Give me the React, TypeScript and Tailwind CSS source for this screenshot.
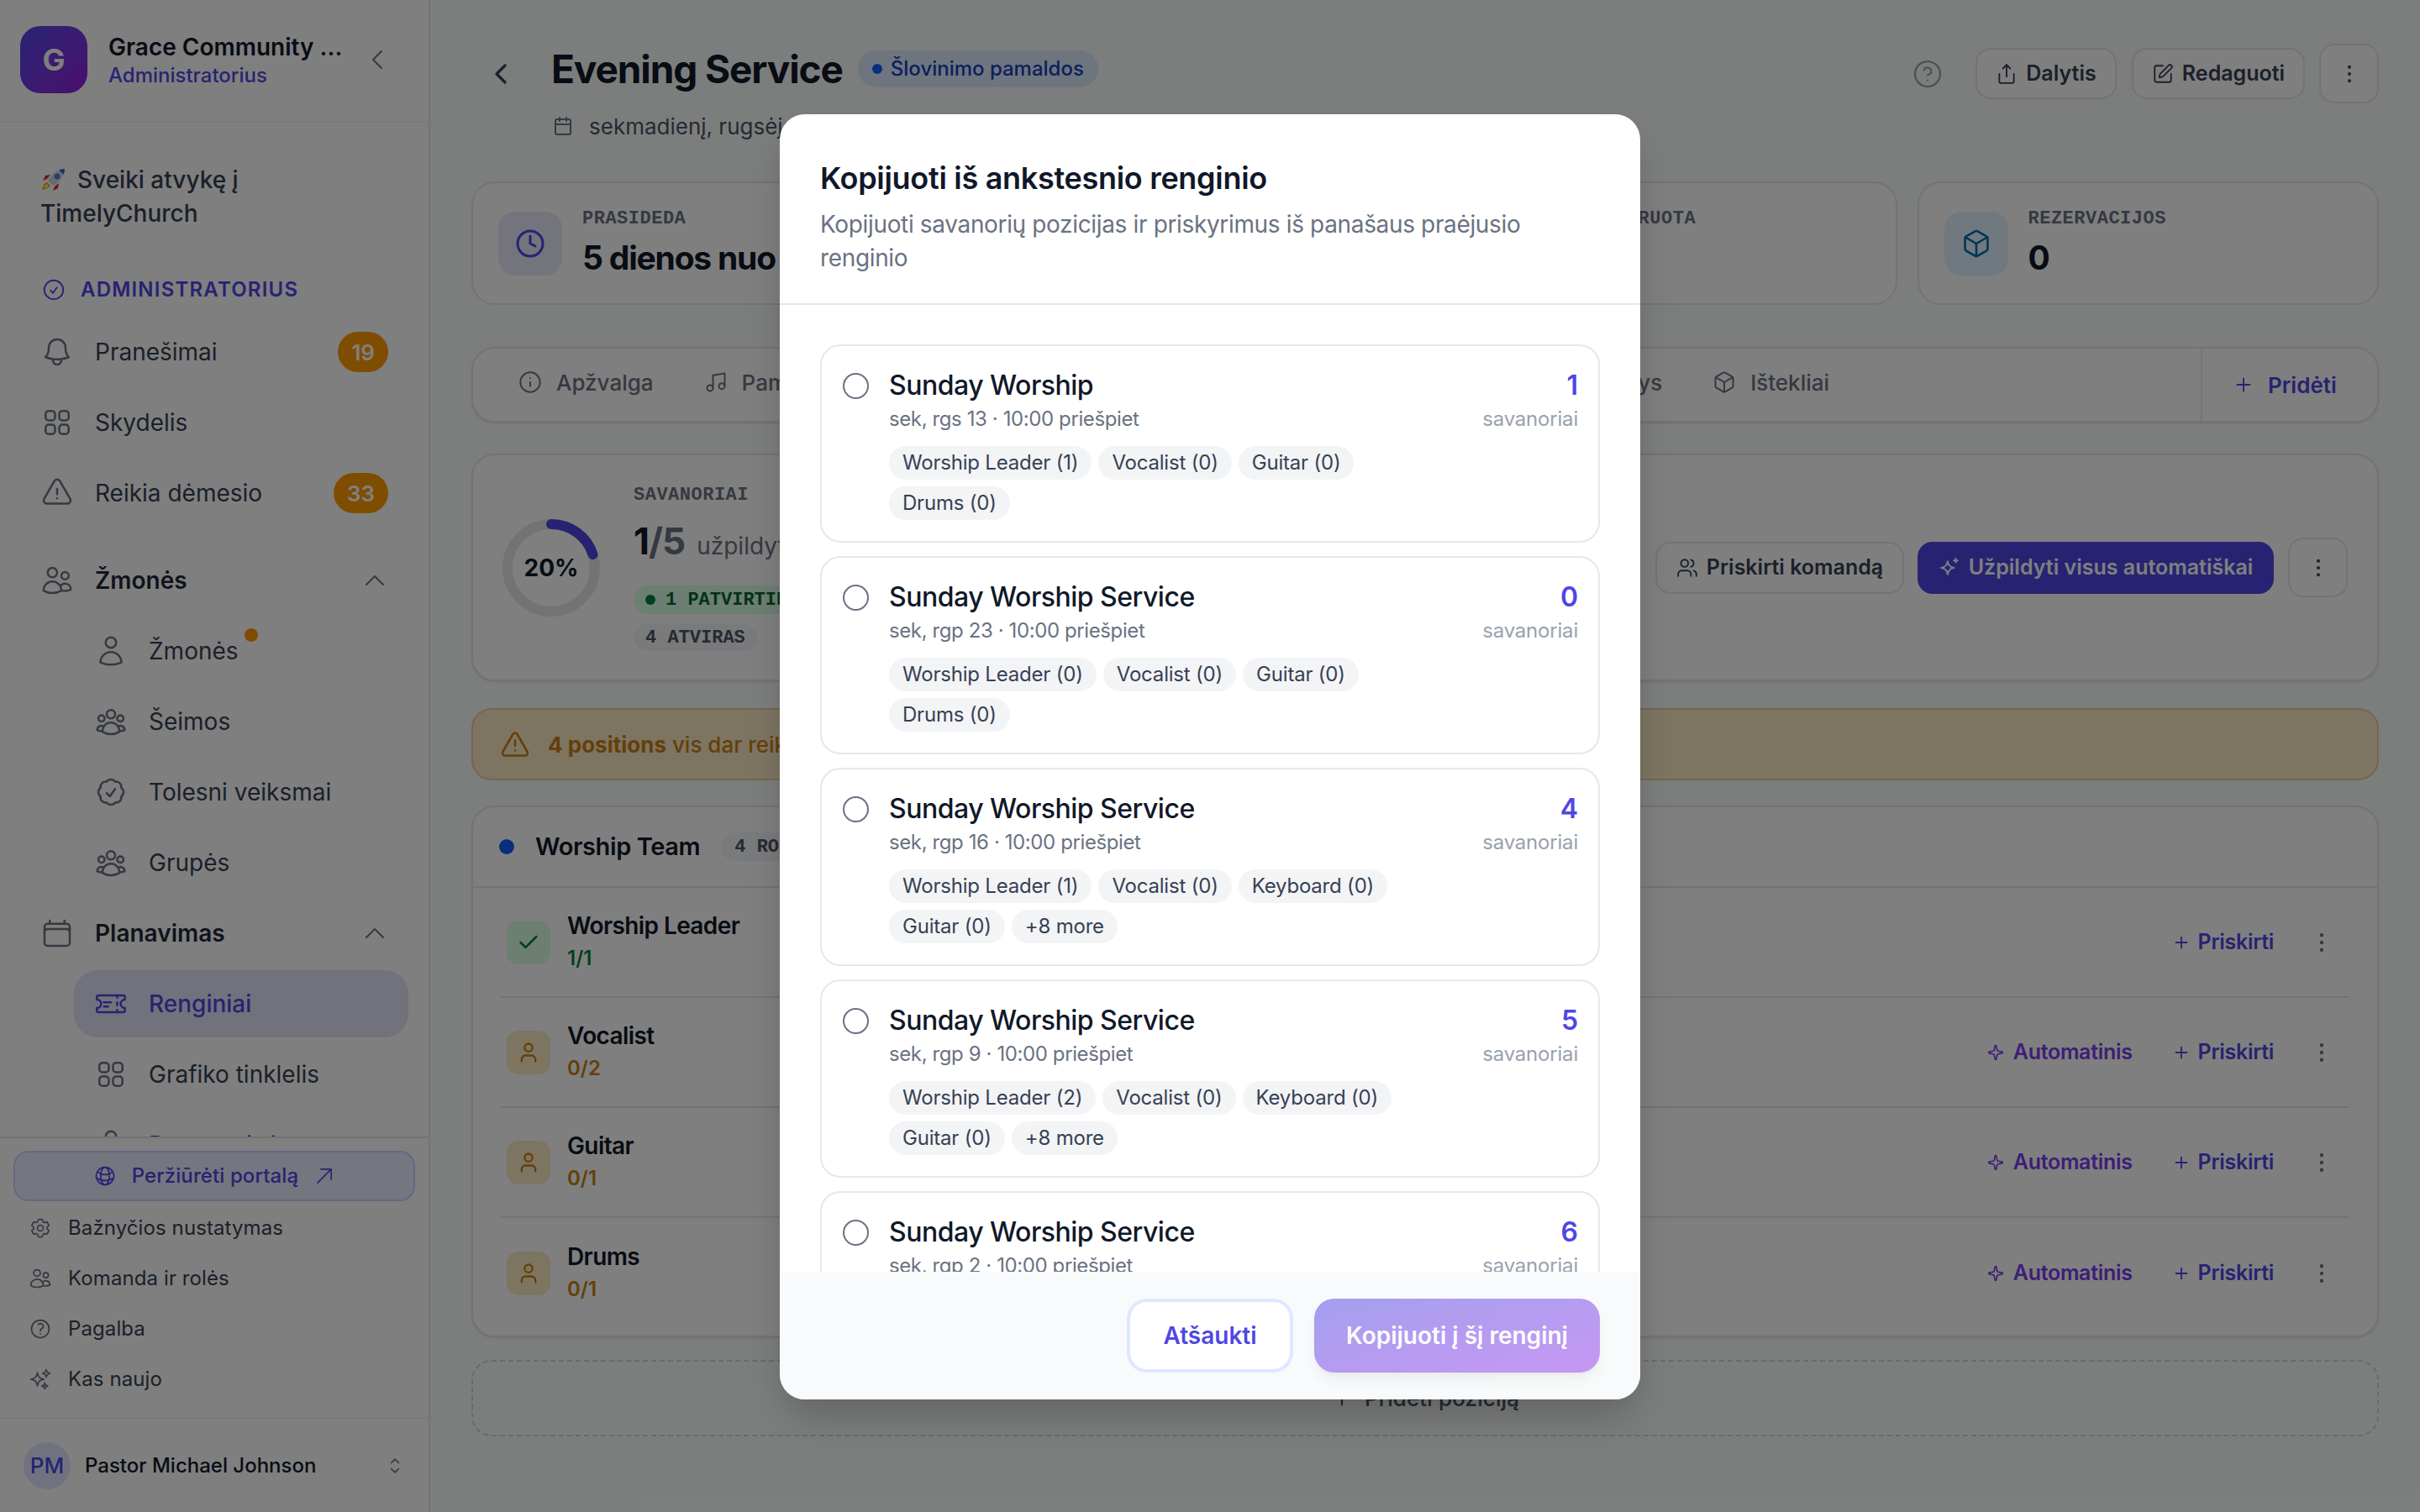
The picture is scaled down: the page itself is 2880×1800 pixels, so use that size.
import { ReactNode } from "react";
import {
  HiOutlineArrowUpRight,
  HiOutlineBell,
  HiOutlineCalendar,
  HiOutlineCheckBadge,
  HiOutlineCheckCircle,
  HiOutlineChevronLeft,
  HiOutlineChevronUp,
  HiOutlineChevronUpDown,
  HiOutlineCog6Tooth,
  HiOutlineExclamationTriangle,
  HiOutlineGlobeAlt,
  HiOutlineQuestionMarkCircle,
  HiOutlineSparkles,
  HiOutlineSquares2X2,
  HiOutlineUser,
  HiOutlineUserGroup,
  HiOutlineUsers,
} from "react-icons/hi2";
import {
  Box,
  Calendar,
  Check,
  ChevronLeft,
  CircleHelp,
  Clock,
  EllipsisVertical,
  Info,
  Music,
  Plus,
  Share,
  Sparkle,
  SquarePen,
  TriangleAlert,
  User,
  Users,
} from "lucide-react";

const mono = "font-['Liberation_Mono',monospace] font-bold";

const Rocket = () => (
  <svg viewBox="0 0 30 28" className="w-[30px] h-[28px] shrink-0">
    <path d="M2 26c1-5 3-8 6-9l4 4c-2 3-5 4-10 5Z" fill="#f59e0b" />
    <path d="M4 24c1-3 2-4 4-5l2 2c-1 2-3 3-6 3Z" fill="#fde68a" />
    <path d="M8 13 3 15l3-6 6-1ZM17 22l-2 5 6-3 1-6Z" fill="#dc2626" />
    <path d="M9 15C13 7 20 2 29 1c-1 9-6 16-14 20Z" fill="#cbd5e1" />
    <path d="M22 2c2 0 5-1 7-1 0 2-1 5-1 7Z" fill="#2563eb" />
    <circle cx="20" cy="10" r="3" fill="#3b82f6" stroke="#64748b" strokeWidth="1" />
  </svg>
);

const TicketIcon = () => (
  <svg viewBox="0 0 24 24" fill="none" stroke="currentColor" strokeWidth="1.5" strokeLinecap="round" strokeLinejoin="round" className="w-[40px] h-[40px] shrink-0">
    <path d="M2 9a3 3 0 0 1 0 6v2a1 1 0 0 0 1 1h18a1 1 0 0 0 1-1v-2a3 3 0 0 1 0-6V7a1 1 0 0 0-1-1H3a1 1 0 0 0-1 1Z" />
    <path d="M16.5 6v1.5M16.5 11v2M16.5 16.5V18M7 11h5M7 14h3" />
  </svg>
);

const FillSpark = () => (
  <svg viewBox="0 0 24 24" fill="none" stroke="currentColor" strokeWidth="2" strokeLinecap="round" strokeLinejoin="round" className="w-[26px] h-[26px] shrink-0">
    <path d="M10 5c.8 4.5 2.5 6.2 7 7-4.500.8-6.200 2.500-7 7-.8-4.500-2.500-6.200-7-7 4.500-.8 6.200-2.500 7-7Z" />
    <path d="M19 2v4M17 4h4" />
  </svg>
);

const NavItem = ({ icon, label, badge, bold, chevron, sub, active, dot }: {
  icon: ReactNode;
  label: string;
  badge?: string;
  bold?: boolean;
  chevron?: boolean;
  sub?: boolean;
  active?: boolean;
  dot?: boolean;
}) => (
  <div className={`flex items-center h-[80px] shrink-0 rounded-[28px] mr-[24px] pl-[24px] pr-[24px] gap-[25px] ${sub ? "ml-[88px]" : "ml-[24px]"} ${active ? "bg-[#e2e4f6] text-[#4f46e5] font-medium" : "text-gray-700"}`}>
    <span className={active ? "text-[#4f46e5]" : "text-gray-500"}>{icon}</span>
    <span className={`relative text-[28px] ${bold ? "font-semibold text-gray-800" : ""}`}>
      {label}
      {dot && <span className="absolute -right-[23px] top-[-6px] w-[16px] h-[16px] rounded-full bg-amber-500" />}
    </span>
    {badge && <span className="ml-auto h-[48px] px-[16px] rounded-full bg-amber-500 text-white text-[26px] font-semibold flex items-center">{badge}</span>}
    {chevron && <HiOutlineChevronUp size={32} className="ml-auto text-gray-500" />}
  </div>
);

const FootLink = ({ icon, label }: { icon: ReactNode; label: string }) => (
  <div className="flex items-center h-[60px] pl-[34px] gap-[19px] text-[24px] tracking-[0.1px] text-gray-700">
    <span className="text-gray-500">{icon}</span>
    {label}
  </div>
);

const Sidebar = () => (
  <aside className="w-[512px] shrink-0 h-full flex flex-col bg-white border-r-2 border-gray-200">
    <div className="h-[146px] shrink-0 border-b-2 border-gray-100 flex items-center pl-[24px] pb-[2px]">
      <div className="w-[80px] h-[80px] rounded-[24px] bg-gradient-to-br from-[#4f46e5] to-[#9316dc] flex items-center justify-center text-white text-[36px] font-bold">G</div>
      <div className="ml-[25px] w-[290px] pt-[2px]">
        <div className="text-[28px] leading-[36px] font-semibold text-gray-900 whitespace-nowrap">Grace Community ...</div>
        <div className="text-[24px] leading-[32px] font-medium text-[#4f46e5]">Administratorius</div>
      </div>
      <HiOutlineChevronLeft size={32} className="ml-[14px] text-gray-500" />
    </div>

    <div className="flex-1 min-h-0 overflow-hidden flex flex-col gap-[4px]">
      <div className="mt-[48px] pl-[48px] text-[28px] leading-[40px] font-medium text-gray-700 w-[400px] shrink-0">
        <div className="flex items-center gap-[14px]"><Rocket />Sveiki atvykę į</div>
        <div>TimelyChurch</div>
      </div>
      <div className="mt-[50px] pl-[49px] h-[34px] shrink-0 flex items-center gap-[17px] text-[#4f46e5] text-[24px] font-semibold tracking-[1.2px]">
        <HiOutlineCheckCircle size={30} />
        ADMINISTRATORIUS
      </div>
      <div className="h-[9px] shrink-0" />
      <NavItem icon={<HiOutlineBell size={40} />} label="Pranešimai" badge="19" />
      <NavItem icon={<HiOutlineSquares2X2 size={40} />} label="Skydelis" />
      <NavItem icon={<HiOutlineExclamationTriangle size={40} />} label="Reikia dėmesio" badge="33" />
      <div className="h-[16px] shrink-0" />
      <NavItem icon={<HiOutlineUsers size={40} />} label="Žmonės" bold chevron />
      <NavItem sub icon={<HiOutlineUser size={40} />} label="Žmonės" dot />
      <NavItem sub icon={<HiOutlineUserGroup size={40} />} label="Šeimos" />
      <NavItem sub icon={<HiOutlineCheckBadge size={40} />} label="Tolesni veiksmai" />
      <NavItem sub icon={<HiOutlineUserGroup size={40} />} label="Grupės" />
      <NavItem icon={<HiOutlineCalendar size={40} />} label="Planavimas" bold chevron />
      <NavItem sub active icon={<TicketIcon />} label="Renginiai" />
      <NavItem sub icon={<HiOutlineSquares2X2 size={40} />} label="Grafiko tinklelis" />
      <NavItem sub icon={<HiOutlineUser size={40} />} label="Pastoracinė" />
    </div>

    <div className="h-[334px] shrink-0 border-t-2 border-gray-200 flex flex-col">
      <div className="mx-[16px] mt-[15px] h-[60px] shrink-0 rounded-[18px] border-2 border-indigo-200 bg-[#eaecff] flex items-center justify-center gap-[18px] text-[#4f46e5] text-[24px] tracking-[0.1px] font-medium">
        <HiOutlineGlobeAlt size={28} />
        Peržiūrėti portalą
        <HiOutlineArrowUpRight size={26} />
      </div>
      <div className="mt-[2px]">
        <FootLink icon={<HiOutlineCog6Tooth size={28} />} label="Bažnyčios nustatymas" />
        <FootLink icon={<HiOutlineUsers size={28} />} label="Komanda ir rolės" />
        <FootLink icon={<HiOutlineQuestionMarkCircle size={28} />} label="Pagalba" />
        <FootLink icon={<HiOutlineSparkles size={28} />} label="Kas naujo" />
      </div>
    </div>
    <div className="h-[113px] shrink-0 border-t-2 border-gray-100 flex items-center pl-[28px] pr-[26px] gap-[17px]">
      <div className="w-[56px] h-[56px] rounded-full bg-indigo-100 text-[#4f46e5] flex items-center justify-center text-[26px] font-medium">PM</div>
      <span className="text-[24px] font-medium text-gray-900">Pastor Michael Johnson</span>
      <HiOutlineChevronUpDown size={28} className="ml-auto text-gray-500" />
    </div>
  </aside>
);

const StatCard = ({ icon, tone, label, value }: { icon: ReactNode; tone: string; label: string; value: string }) => (
  <div className="h-[147px] rounded-[28px] border-2 border-gray-200 bg-white flex items-center px-[30px] gap-[24px]">
    <div className={`w-[76px] h-[76px] rounded-[20px] flex items-center justify-center ${tone}`}>{icon}</div>
    <div className="pt-[2px]">
      <div className={`${mono} text-[22px] leading-[28px] tracking-[0.5px] text-gray-500`}>{label}</div>
      <div className="mt-[4px] text-[39px] leading-[56px] font-bold text-gray-900 whitespace-nowrap tracking-[-1.2px]">{value}</div>
    </div>
  </div>
);

const Tab = ({ icon, label, className = "" }: { icon: ReactNode; label: string; className?: string }) => (
  <div className={`flex items-center gap-[17px] text-gray-500 text-[26px] font-medium whitespace-nowrap ${className}`}>
    {icon}
    {label}
  </div>
);

const RoleRow = ({ name, count, done, last }: { name: string; count: string; done?: boolean; last?: boolean }) => (
  <div className={`mx-[33px] h-[131px] flex items-center pl-[7px] pr-[18px] ${last ? "" : "border-b-2 border-gray-200"}`}>
    <div className={`w-[52px] h-[52px] rounded-[14px] flex items-center justify-center ${done ? "bg-green-100 text-green-700" : "bg-[#faeac4] text-[#c97f14]"}`}>
      {done ? <Check size={28} strokeWidth={2.2} /> : <User size={28} strokeWidth={2} />}
    </div>
    <div className="ml-[20px]">
      <div className="text-[28px] leading-[36px] font-semibold text-gray-900 tracking-[-0.6px]">{name}</div>
      <div className={`mt-[3px] text-[24px] leading-[36px] font-semibold ${done ? "text-green-700" : "text-[#c97f14]"}`}>{count}</div>
    </div>
    <div className="ml-auto flex items-center text-[25px] font-semibold tracking-[-0.3px]">
      {!done && (
        <div className="flex items-center gap-[11px] text-[#7c3aed] mr-[47px]">
          <Sparkle size={20} />
          Automatinis
        </div>
      )}
      <div className="flex items-center gap-[9px] text-[#4f46e5]">
        <Plus size={22} />
        Priskirti
      </div>
      <EllipsisVertical size={30} strokeWidth={1.5} className="ml-[42px] text-gray-500" />
    </div>
  </div>
);

const MainContent = () => (
  <main className="flex-1 min-w-0 h-full bg-[#f9fcfb] px-[49px]">
    <header className="h-[216px] pt-[52px] flex items-start">
      <div className="w-[95px] h-[71px] flex items-center pl-[15px] text-gray-700">
        <ChevronLeft size={40} />
      </div>
      <div>
        <div className="h-[60px] flex items-center">
          <h1 className="text-[46px] font-bold tracking-[-1.1px] text-gray-900">Evening Service</h1>
          <span className="ml-[18px] h-[44px] px-[17px] rounded-full bg-blue-100 text-blue-800 text-[24px] font-medium flex items-center gap-[10px]">
            <span className="w-[12px] h-[12px] rounded-full bg-blue-600" />
            Šlovinimo pamaldos
          </span>
        </div>
        <div className="mt-[20px] h-[36px] flex items-center gap-[19px] text-gray-600 text-[26px]">
          <Calendar size={24} className="text-gray-500 ml-[2px]" />
          sekmadienį, rugsėjo 20 d.
        </div>
      </div>
      <div className="ml-auto h-[71px] flex items-center">
        <CircleHelp size={36} strokeWidth={1.5} className="text-gray-400 mr-[39px]" />
        <div className="w-[168px] h-[61px] rounded-[18px] border-2 border-gray-200 bg-white flex items-center justify-center gap-[10px] text-gray-700 text-[25px] font-semibold">
          <Share size={26} strokeWidth={1.7} />
          Dalytis
        </div>
        <div className="ml-[18px] w-[206px] h-[61px] rounded-[18px] border-2 border-gray-200 bg-white flex items-center justify-center gap-[10px] text-gray-700 text-[25px] font-semibold">
          <SquarePen size={26} strokeWidth={1.7} />
          Redaguoti
        </div>
        <div className="ml-[17px] w-[71px] h-[71px] rounded-[18px] border-2 border-gray-200 bg-white flex items-center justify-center text-gray-700">
          <EllipsisVertical size={28} strokeWidth={1.5} />
        </div>
      </div>
    </header>

    <section className="grid grid-cols-4 gap-[24px]">
      <StatCard icon={<Clock size={36} />} tone="bg-[#e8e8fa] text-[#4f46e5]" label="PRASIDEDA" value="5 dienos nuo dabar" />
      <StatCard icon={<Users size={36} />} tone="bg-green-100 text-green-700" label="SAVANORIAI" value="1/5" />
      <StatCard icon={<Check size={36} />} tone="bg-amber-100 text-amber-700" label="ĮKONFIGŪRUOTA" value="1" />
      <StatCard icon={<Box size={36} strokeWidth={1.7} />} tone="bg-sky-100 text-sky-700" label="REZERVACIJOS" value="0" />
    </section>

    <nav className="mt-[50px] h-[90px] rounded-[28px] border-2 border-gray-200 bg-white shadow-sm overflow-hidden flex items-stretch">
      <div className="flex-1 flex items-center pl-[54px] pb-[6px] gap-[60px]">
        <Tab icon={<Info size={28} strokeWidth={1.7} />} label="Apžvalga" />
        <Tab icon={<Music size={28} strokeWidth={1.7} />} label="Pamaldos" />
        <Tab icon={<Users size={28} strokeWidth={1.7} />} label="Savanoriai" className="ml-[37px]" />
        <Tab icon={<Calendar size={28} strokeWidth={1.7} />} label="Tvarkaraštis" />
        <Tab icon={<Info size={28} strokeWidth={1.7} />} label="Pastabos" />
        <Tab icon={<Check size={28} strokeWidth={1.7} />} label="Užduotys" />
        <Tab icon={<Box size={28} strokeWidth={1.7} />} label="Ištekliai" />
      </div>
      <div className="w-[210px] border-l-2 border-gray-200 flex items-center pl-[36px] gap-[16px] text-[#4f46e5] text-[26px] font-semibold">
        <Plus size={26} strokeWidth={1.7} />
        Pridėti
      </div>
    </nav>

    <section className="mt-[37px] h-[271px] rounded-[28px] border-2 border-gray-200 bg-white shadow-sm flex items-center px-[35px]">
      <div className="relative w-[116px] h-[116px] shrink-0">
        <svg viewBox="0 0 116 116" className="w-full h-full -rotate-90">
          <circle cx="58" cy="58" r="52" fill="none" stroke="#e5e7eb" strokeWidth="12" />
          <circle cx="58" cy="58" r="52" fill="none" stroke="#4f46e5" strokeWidth="12" strokeLinecap="round" strokeDasharray="65.3 326.7" />
        </svg>
        <div className="absolute inset-0 flex items-center justify-center text-[28px] font-bold text-gray-900">20%</div>
      </div>
      <div className="ml-[40px]">
        <div className={`${mono} text-[22px] leading-[28px] tracking-[0.5px] text-gray-500`}>SAVANORIAI</div>
        <div className="mt-[12px] flex items-baseline h-[56px] leading-[56px]">
          <span className="text-[44px] font-bold text-gray-900 tracking-[-1px]">1<span className="text-gray-500">/5</span></span>
          <span className="ml-[14px] text-[28px] text-gray-500">užpildyta</span>
        </div>
        <div className="mt-[25px] flex flex-col items-start gap-[12px]">
          <span className={`${mono} h-[34px] px-[14px] rounded-full bg-green-100 text-green-800 text-[22px] flex items-center gap-[12px]`}>
            <span className="w-[12px] h-[12px] rounded-full bg-green-700" />
            1 PATVIRTINTAS
          </span>
          <span className={`${mono} h-[32px] px-[14px] rounded-full bg-gray-100 text-gray-600 text-[22px] flex items-center`}>4 ATVIRAS</span>
        </div>
      </div>
      <div className="ml-auto flex items-center">
        <div className="h-[62px] w-[296px] rounded-[18px] border-2 border-gray-200 bg-white flex items-center justify-center gap-[10px] text-gray-700 text-[25px] font-semibold">
          <Users size={26} strokeWidth={1.7} />
          Priskirti komandą
        </div>
        <div className="ml-[16px] h-[62px] w-[424px] rounded-[18px] bg-[#4f46e5] text-white flex items-center justify-center gap-[10px] text-[25px] font-semibold">
          <FillSpark />
          Užpildyti visus automatiškai
        </div>
        <div className="ml-[17px] w-[71px] h-[71px] rounded-[18px] border-2 border-gray-200 bg-white flex items-center justify-center text-gray-700">
          <EllipsisVertical size={28} strokeWidth={1.5} />
        </div>
      </div>
    </section>

    <div className="mt-[32px] h-[86px] rounded-[24px] border-2 border-[#e8cf9a] bg-[#faeac4] flex items-center pl-[32px] gap-[21px] text-[26px] text-[#c97f14] font-medium">
      <TriangleAlert size={36} strokeWidth={1.7} />
      <span><b className="font-bold">4 positions</b> vis dar reikia užpildyti</span>
    </div>

    <section className="mt-[30px] h-[633px] rounded-[28px] border-2 border-gray-200 bg-white shadow-sm overflow-hidden">
      <div className="h-[96px] border-b-2 border-gray-200 flex items-center pl-[31px]">
        <span className="w-[18px] h-[18px] rounded-full bg-blue-600" />
        <span className="ml-[25px] text-[29px] font-semibold text-gray-900 tracking-[-0.4px]">Worship Team</span>
        <span className={`${mono} ml-[25px] h-[34px] px-[16px] rounded-full bg-gray-100 text-gray-600 text-[22px] flex items-center`}>4 ROLĖS</span>
      </div>
      <RoleRow name="Worship Leader" count="1/1" done />
      <RoleRow name="Vocalist" count="0/2" />
      <RoleRow name="Guitar" count="0/1" />
      <RoleRow name="Drums" count="0/1" last />
    </section>

    <div className="mt-[27px] h-[91px] rounded-[24px] border-2 border-dashed border-gray-300 flex items-center justify-center gap-[14px] text-gray-600 text-[26px] tracking-[0.1px] font-medium">
      <Plus size={26} />
      Pridėti poziciją
    </div>
  </main>
);

const events = [
  { name: "Sunday Worship", date: "sek, rgs 13 · 10:00 priešpiet", count: "1", chips: ["Worship Leader (1)", "Vocalist (0)", "Guitar (0)", "Drums (0)"] },
  { name: "Sunday Worship Service", date: "sek, rgp 23 · 10:00 priešpiet", count: "0", chips: ["Worship Leader (0)", "Vocalist (0)", "Guitar (0)", "Drums (0)"] },
  { name: "Sunday Worship Service", date: "sek, rgp 16 · 10:00 priešpiet", count: "4", chips: ["Worship Leader (1)", "Vocalist (0)", "Keyboard (0)", "Guitar (0)", "+8 more"] },
  { name: "Sunday Worship Service", date: "sek, rgp 9 · 10:00 priešpiet", count: "5", chips: ["Worship Leader (2)", "Vocalist (0)", "Keyboard (0)", "Guitar (0)", "+8 more"] },
  { name: "Sunday Worship Service", date: "sek, rgp 2 · 10:00 priešpiet", count: "6", chips: ["Worship Leader (1)", "Vocalist (0)", "Keyboard (0)", "Guitar (0)", "+8 more"] },
];

const CopyDialog = () => (
  <div className="absolute inset-0 bg-black/50 flex items-center justify-center">
    <div className="w-[1024px] h-[1530px] mt-[2px] rounded-[30px] bg-white shadow-2xl overflow-hidden flex flex-col">
      <div className="h-[227px] shrink-0 border-b-2 border-gray-200 pt-[54px] px-[48px]">
        <h2 className="text-[36px] leading-[44px] font-semibold text-gray-900 tracking-[-0.3px]">Kopijuoti iš ankstesnio renginio</h2>
        <p className="mt-[13px] text-[28px] leading-[40px] text-gray-500 tracking-[-0.35px]">Kopijuoti savanorių pozicijas ir priskyrimus iš panašaus praėjusio renginio</p>
      </div>
      <div className="flex-1 min-h-0 overflow-hidden px-[48px] pt-[47px] flex flex-col gap-[16px]">
        {events.map((ev) => (
          <div key={ev.date} className="h-[236px] shrink-0 rounded-[24px] border-2 border-gray-200 pl-[25px] pr-[24px] pt-[25px] flex">
            <span className="w-[31px] h-[31px] mt-[7px] shrink-0 rounded-full border-2 border-gray-500" />
            <div className="ml-[24px] flex-1 min-w-0">
              <div className="text-[32px] leading-[44px] font-medium text-gray-900 tracking-[-0.5px]">{ev.name}</div>
              <div className="mt-[1px] text-[24px] leading-[34px] text-gray-500 tracking-[-0.4px]">{ev.date}</div>
              <div className="mt-[15px] max-w-[640px] flex flex-wrap gap-[8px]">
                {ev.chips.map((c) => (
                  <span key={c} className="h-[40px] px-[16px] rounded-full bg-gray-100 text-gray-700 text-[24px] tracking-[-0.2px] flex items-center">{c}</span>
                ))}
              </div>
            </div>
            <div className="text-right">
              <div className="text-[32px] leading-[44px] font-semibold text-[#4f46e5]">{ev.count}</div>
              <div className="mt-[1px] text-[24px] leading-[34px] tracking-[-0.2px] text-gray-400">savanoriai</div>
            </div>
          </div>
        ))}
      </div>
      <div className="h-[152px] shrink-0 bg-gray-50 flex items-center justify-end gap-[25px] pl-[48px] pr-[48px] pb-[1px]">
        <div className="w-[198px] h-[88px] rounded-[24px] border-[4px] border-indigo-100 bg-white flex items-center justify-center text-[#4f46e5] text-[28px] font-semibold">Atšaukti</div>
        <div className="w-[340px] h-[88px] rounded-[24px] bg-gradient-to-br from-[#4f46e5] to-[#9333ea] opacity-50 shadow-lg flex items-center justify-center text-white text-[28px] font-semibold">Kopijuoti į šį renginį</div>
      </div>
    </div>
  </div>
);

const App = () => {
  return (
    <div className="relative w-[2880px] h-[1800px] overflow-hidden flex font-['Inter',sans-serif]">
      <Sidebar />
      <MainContent />
      <CopyDialog />
    </div>
  );
};

export default App;
